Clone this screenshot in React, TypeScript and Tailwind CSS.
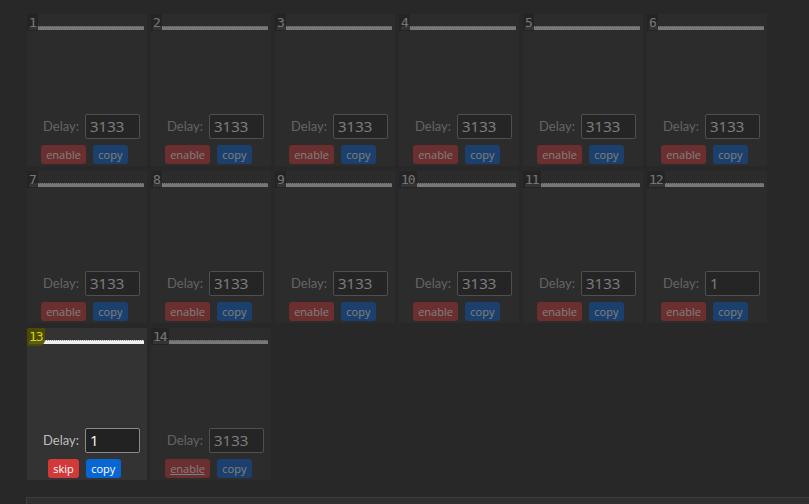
import React from "react";

type Slot = { n: number; delay: string; active?: boolean; hover?: boolean };

const slots: Slot[] = [
  ...Array.from({ length: 11 }, (_, i) => ({ n: i + 1, delay: "3133" })),
  { n: 12, delay: "1" },
  { n: 13, delay: "1", active: true },
  { n: 14, delay: "3133", hover: true },
];

const SlotCard = ({ slot }: { slot: Slot }) => {
  return (
    <div
      className={`flex flex-col h-[152px] bg-[#333333] pb-[2px] ${
        slot.active ? "" : "opacity-40"
      }`}
    >
      {/* Header: number + progress bar */}
      <div className="relative h-[17px]">
        <div className="absolute left-[2px] right-[3px] top-[12px] h-[4px] bg-[#f0f0f0] border-t border-dotted border-[#9a9a9a]" />
        {slot.active ? (
          <div className="absolute left-0 top-0 h-[18px] px-[2px] bg-[#4d4d00]/90 rounded-br-[6px] rounded-tl-[2px] text-[13px] leading-[18px] text-[#d6d21a] font-['DejaVu_Sans_Mono',monospace] tracking-[-1px]">
            {slot.n}
          </div>
        ) : (
          <div className="absolute left-0 top-0 h-[17px] px-[2px] bg-[#1c1c1c]/80 text-[13px] leading-[18px] text-[#e8e8e8] font-['DejaVu_Sans_Mono',monospace] tracking-[-1px]">
            {slot.n}
          </div>
        )}
      </div>

      <div className="flex-1" />

      {/* Delay */}
      <div className="flex items-center justify-end gap-[6px] pr-[7px]">
        <span className="text-[13px] text-[#bdbdbd] font-['Lato',sans-serif]">
          Delay:
        </span>
        <div className="w-[55px] h-[25px] border border-[#8a8a8a] bg-[#222222] rounded-[2px] px-[4px] text-[15px] leading-[23px] text-white font-['Open_Sans',sans-serif]">
          {slot.delay}
        </div>
      </div>

      {/* Actions */}
      <div className="flex justify-center gap-[7px] pr-[5px] mt-[6px] font-['Open_Sans',sans-serif]">
        <button
          className={`h-[19px] px-[5px] rounded-[3px] bg-[#d23a3a] text-white text-[11px] leading-[19px] ${
            slot.hover ? "underline" : ""
          }`}
        >
          {slot.active ? "skip" : "enable"}
        </button>
        <button className="h-[19px] w-[35px] rounded-[3px] bg-[#0866d4] text-white text-[11px] leading-[19px]">
          copy
        </button>
      </div>
    </div>
  );
};

export default function App() {
  return (
    <div className="w-[809px] h-[504px] bg-[#282828] overflow-hidden flex flex-col">
      <div className="pl-[27px] pt-[14px] grid grid-cols-[repeat(6,120px)] gap-x-[4px] gap-y-[5px]">
        {slots.map((s) => (
          <SlotCard key={s.n} slot={s} />
        ))}
      </div>
      <div className="flex-1" />
      <div className="ml-[26px] h-[7px] bg-[#2f2f2f] border-t border-l border-[#3c3c3c]" />
    </div>
  );
}
